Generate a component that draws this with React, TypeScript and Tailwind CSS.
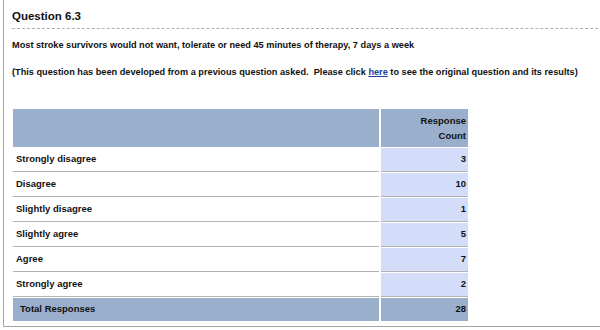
import React from "react";

const rows = [
  { label: "Strongly disagree", count: 3 },
  { label: "Disagree", count: 10 },
  { label: "Slightly disagree", count: 1 },
  { label: "Slightly agree", count: 5 },
  { label: "Agree", count: 7 },
  { label: "Strongly agree", count: 2 },
];

export default function App() {
  return (
    <div className="w-[600px] h-[330px] overflow-hidden bg-white text-[#111] font-['Liberation_Sans',Arial,sans-serif]">
      <div className="ml-[3px] w-[640px] border-l border-b border-[#a6a6a6] pl-[8px] pb-[4px]">
        {/* Question title */}
        <div className="h-[29px] pt-[9px] border-b border-dashed border-[#b0b0b0]">
          <h2 className="text-[11.5px] leading-[14px] font-bold">Question 6.3</h2>
        </div>

        <p className="mt-[10px] text-[9.2px] leading-[12px] font-bold">
          Most stroke survivors would not want, tolerate or need 45 minutes of therapy, 7 days a week
        </p>
        <p className="mt-[15px] text-[9.2px] leading-[12px] font-bold">
          (This question has been developed from a previous question asked.&nbsp; Please click{" "}
          <a href="#" className="text-[#1d3f99] underline">here</a> to see the original question and its results)
        </p>

        {/* Results table */}
        <table className="mt-[30px] -ml-[1px] border-separate border-spacing-x-[2px] border-spacing-y-[1px] text-[9.5px] font-bold">
          <thead>
            <tr>
              <th className="w-[366px] h-[38px] bg-[#9aafcc] p-0"></th>
              <th className="w-[87px] h-[38px] bg-[#9aafcc] pr-[2px] text-right align-middle leading-[15px] font-bold">
                Response
                <br />
                Count
              </th>
            </tr>
          </thead>
          <tbody>
            {rows.map((r) => (
              <tr key={r.label}>
                <td className="h-[24px] pl-[3px] border-b border-[#b3b3b3] align-middle">{r.label}</td>
                <td className="h-[24px] pr-[2px] text-right bg-[#d3ddf9] border-b border-[#b3b3b3] align-middle">{r.count}</td>
              </tr>
            ))}
            <tr>
              <td className="h-[23px] pl-[7px] bg-[#9aafcc] align-middle">Total Responses</td>
              <td className="h-[23px] pr-[2px] text-right bg-[#9aafcc] align-middle">28</td>
            </tr>
          </tbody>
        </table>
      </div>
    </div>
  );
}
